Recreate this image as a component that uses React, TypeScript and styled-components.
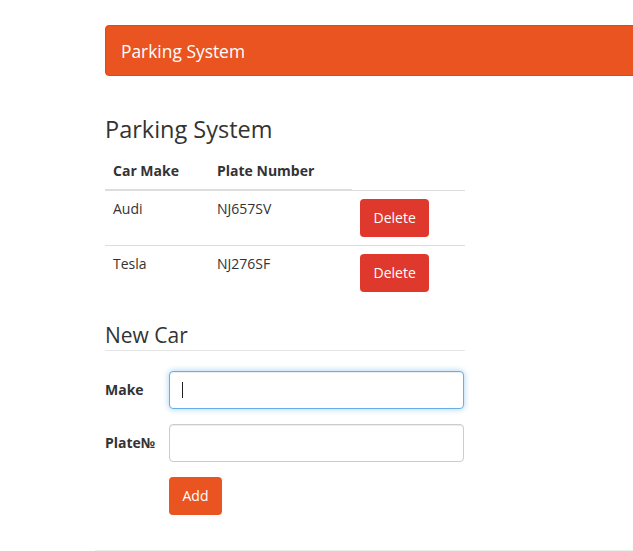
import React from "react";
import styled, { createGlobalStyle } from "styled-components";

const GlobalStyle = createGlobalStyle`
  html, body {
    margin: 0;
    padding: 0;
    background: #ffffff;
  }
  body {
    font-family: "Open Sans", "Noto Sans", sans-serif;
    font-size: 14px;
    line-height: 20px;
    color: #333333;
    overflow: hidden;
  }
  * { box-sizing: border-box; }
`;

const Page = styled.div`
  width: 633px;
  height: 551px;
  overflow: hidden;
  padding: 25px 0 0 95px;
`;

const Navbar = styled.nav`
  margin-left: 10px;
  margin-right: -20px;
  height: 51px;
  background: #e95420;
  border: 1px solid #dd4814;
  border-radius: 4px;
  display: flex;
  align-items: center;
  padding: 1px 0 0 15px;
`;

const Brand = styled.span`
  color: #ffffff;
  font-size: 17.4px;
  line-height: 20px;
`;

const Main = styled.main`
  margin-left: 10px;
  width: 360px;
`;

const Title = styled.h3`
  margin: 40px 0 11px;
  font-size: 23.5px;
  line-height: 26px;
  font-weight: 400;
  color: #333333;
`;

const Table = styled.table`
  width: 360px;
  border-collapse: collapse;
  margin-bottom: 20px;
`;

const HeadCell = styled.th<{ $w: number }>`
  width: ${(p) => p.$w}px;
  text-align: left;
  padding: 8px;
  font-weight: 700;
  border-bottom: 2px solid #dddddd;
  vertical-align: bottom;
`;

const Row = styled.tr`
  border-top: 1px solid #dddddd;
`;

const Cell = styled.td`
  padding: 8px;
  vertical-align: top;
`;

const Button = styled.button<{ $danger?: boolean }>`
  height: 38px;
  padding: 0 13.5px;
  border: none;
  border-radius: 4px;
  background: ${(p) => (p.$danger ? "#df382c" : "#e95420")};
  color: #ffffff;
  font-family: inherit;
  font-size: 14px;
  cursor: pointer;
`;

const Legend = styled.div`
  font-size: 21px;
  line-height: 30px;
  color: #333333;
  border-bottom: 1px solid #e5e5e5;
  margin-bottom: 20px;
`;

const FormRow = styled.div`
  display: flex;
  align-items: center;
  margin-bottom: 15px;
`;

const Label = styled.label`
  width: 64px;
  font-weight: 700;
`;

const InputWrap = styled.div`
  position: relative;
  width: 295px;
`;

const Input = styled.input<{ $focus?: boolean }>`
  display: block;
  width: 295px;
  height: 38px;
  padding: 6px 12px;
  border: 1px solid ${(p) => (p.$focus ? "#66afe9" : "#cccccc")};
  border-radius: 4px;
  font-family: inherit;
  font-size: 14px;
  color: #333333;
  outline: none;
  box-shadow: ${(p) =>
    p.$focus ? "inset 0 1px 1px rgba(0,0,0,.075), 0 0 6px rgba(102,175,233,.6)" : "inset 0 1px 1px rgba(0,0,0,.075)"};
`;

const Caret = styled.span`
  position: absolute;
  left: 13px;
  top: 11px;
  width: 1px;
  height: 16px;
  background: #222222;
`;

const Rule = styled.hr`
  margin: 35px 0 0;
  border: none;
  border-top: 1px solid #eeeeee;
`;

const cars = [
  { make: "Audi", plate: "NJ657SV" },
  { make: "Tesla", plate: "NJ276SF" },
];

export default function App() {
  return (
    <>
      <GlobalStyle />
      <Page>
        <Navbar>
          <Brand>Parking System</Brand>
        </Navbar>
        <Main>
          <Title>Parking System</Title>
          <Table>
            <thead>
              <tr>
                <HeadCell $w={104}>Car Make</HeadCell>
                <HeadCell $w={143}>Plate Number</HeadCell>
              </tr>
            </thead>
            <tbody>
              {cars.map((c) => (
                <Row key={c.plate}>
                  <Cell>{c.make}</Cell>
                  <Cell>{c.plate}</Cell>
                  <Cell>
                    <Button $danger>Delete</Button>
                  </Cell>
                </Row>
              ))}
            </tbody>
          </Table>
          <Legend>New Car</Legend>
          <FormRow>
            <Label>Make</Label>
            <InputWrap>
              <Input $focus readOnly />
              <Caret />
            </InputWrap>
          </FormRow>
          <FormRow>
            <Label>Plate№</Label>
            <InputWrap>
              <Input readOnly />
            </InputWrap>
          </FormRow>
          <FormRow>
            <Label />
            <Button>Add</Button>
          </FormRow>
        </Main>
        <Rule />
      </Page>
    </>
  );
}
